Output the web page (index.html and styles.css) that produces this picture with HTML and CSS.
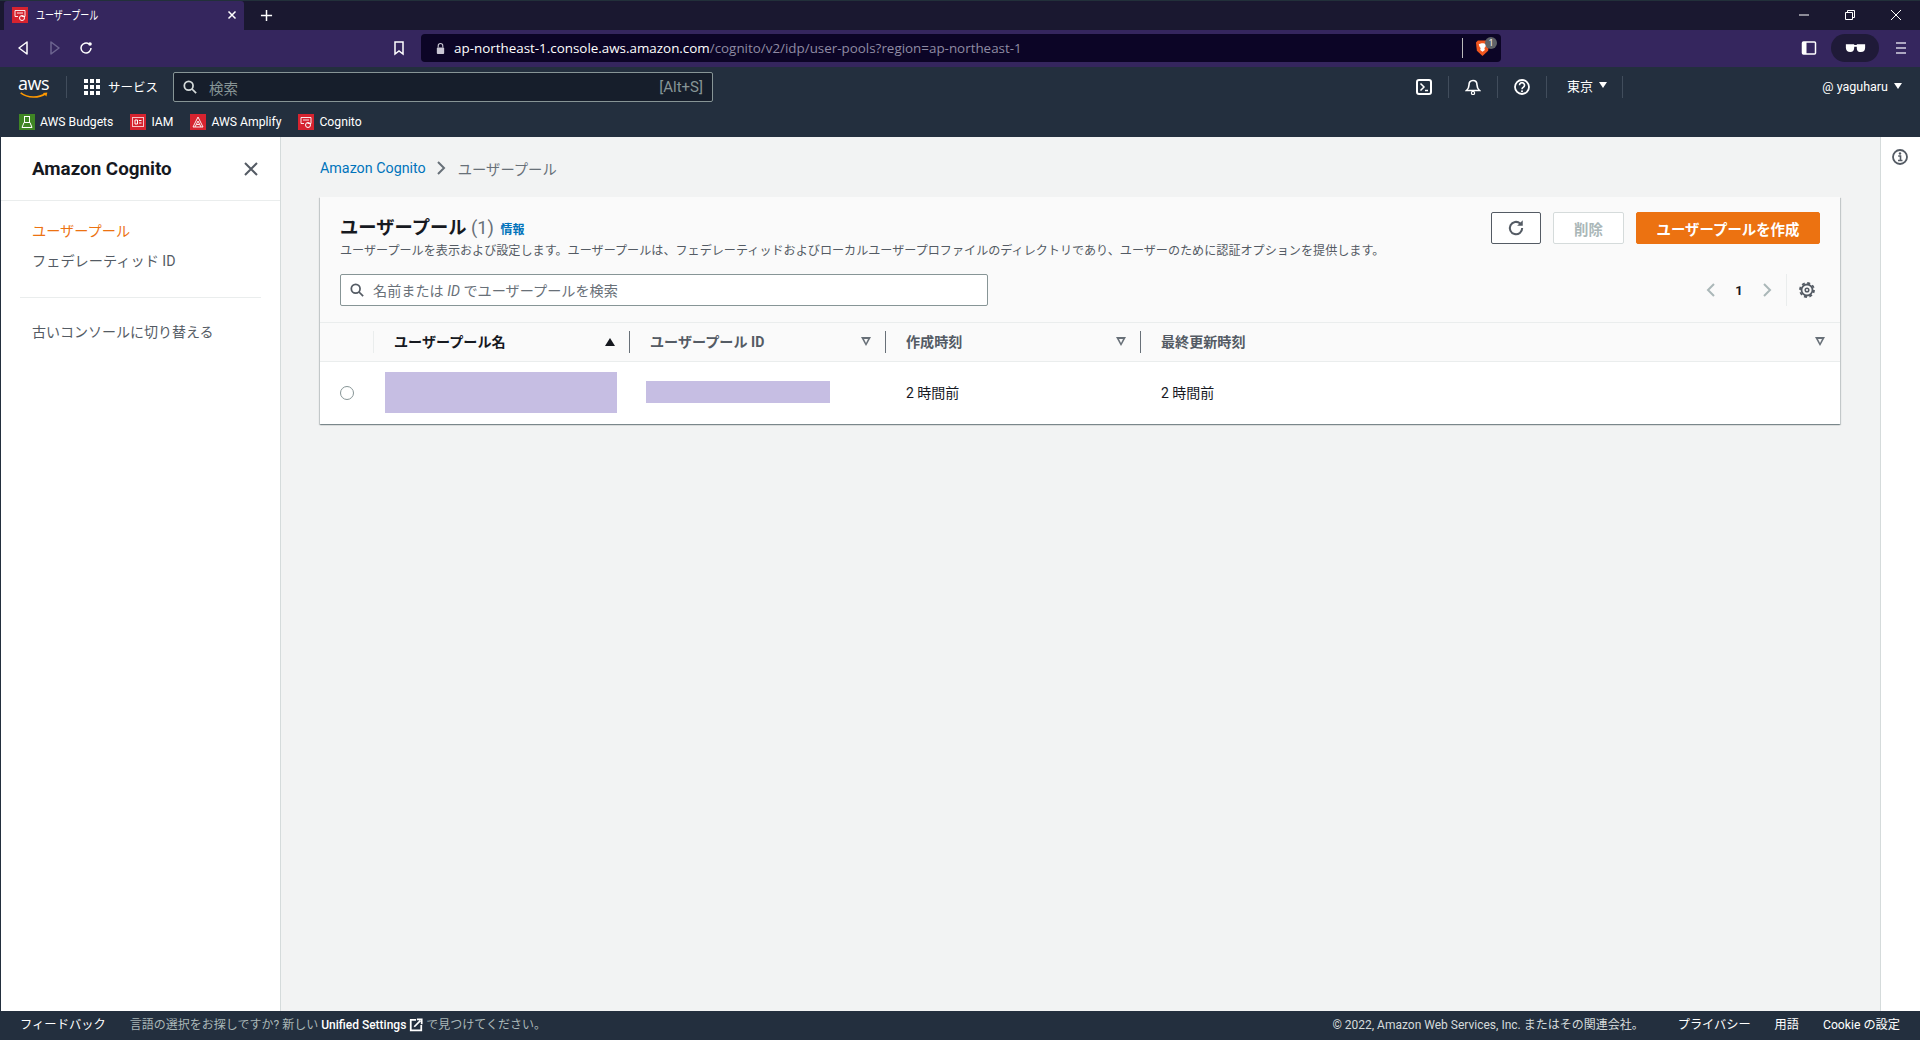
FILE: index.html
```html
<!DOCTYPE html>
<html lang="ja">
<head>
    <meta charset="UTF-8">
    <meta name="viewport" content="width=device-width, initial-scale=1.0">
    <title>ユーザープール</title>
    <link rel="stylesheet" href="styles.css">
</head>
<body>
    <div class="tabbar">
        <div class="tab">
            <svg class="favicon" viewBox="0 0 16 16"><rect width="16" height="16" fill="#d6232f"/><path d="M3 3.500h10v6H9.500M3 3.500v6h3" fill="none" stroke="#fff" stroke-width=".9"/><path d="M5 6h6" stroke="#fff" stroke-width=".9"/><circle cx="10" cy="11" r="2.500" fill="none" stroke="#fff"/></svg>
            <span class="tab-title">ユーザープール</span>
            <svg class="tab-close" viewBox="0 0 10 10"><path d="M1.500 1.500l7 7M8.500 1.500l-7 7" stroke="#fff" stroke-width="1.500"/></svg>
        </div>
        <svg class="tab-new" viewBox="0 0 14 14"><path d="M7 1v12M1 7h12" stroke="#fff" stroke-width="1.600"/></svg>
        <div class="win-buttons">
            <svg viewBox="0 0 12 12"><path d="M1 6h10" stroke="#fff"/></svg>
            <svg viewBox="0 0 12 12"><path d="M1.500 3.500h7v7h-7zM3.500 3.500v-2h7v7h-2" fill="none" stroke="#fff"/></svg>
            <svg viewBox="0 0 12 12"><path d="M1 1l10 10M11 1L1 11" stroke="#fff"/></svg>
        </div>
    </div>

    <div class="toolbar">
        <svg class="tool-icon back" viewBox="0 0 14 16"><path d="M11 2v12L3 8z" fill="none" stroke="#fff" stroke-width="1.500" stroke-linejoin="round"/></svg>
        <svg class="tool-icon forward" viewBox="0 0 14 16"><path d="M3 2v12l8-6z" fill="none" stroke="#6d6590" stroke-width="1.500" stroke-linejoin="round"/></svg>
        <svg class="tool-icon reload" viewBox="0 0 16 16"><path d="M13 8a5 5 0 1 1-2-4" fill="none" stroke="#fff" stroke-width="1.500"/><circle cx="12" cy="4" r="1.800" fill="#fff"/></svg>
        <svg class="tool-icon bookmark" viewBox="0 0 14 16"><path d="M3 2h8v12l-4-3-4 3z" fill="none" stroke="#fff" stroke-width="1.500"/></svg>
        <div class="address">
            <svg class="lock" viewBox="0 0 12 14"><path d="M3.500 6V4a2.500 2.500 0 0 1 5 0v2" fill="none" stroke="#c9c7d4" stroke-width="1.200"/><rect x="2" y="6" width="8" height="7" rx="1" fill="#c9c7d4"/></svg>
            <span class="url"><b>ap-northeast-1.console.aws.amazon.com</b>/cognito/v2/idp/user-pools?region=ap-northeast-1</span>
            <span class="address-sep"></span>
            <span class="brave">
                <svg viewBox="0 0 16 18"><path d="M3 1h10l2 2-1 9-6 5.500L2 12 1 3z" fill="#f1561f"/><path d="M4 5l3-1h2l3 1-1 3-1 1 .5 2L8 13l-2.500-2L6 9 5 8z" fill="#fff"/></svg>
                <span class="brave-count">1</span>
            </span>
        </div>
        <svg class="tool-icon sidebar-toggle" viewBox="0 0 16 16"><rect x="1.500" y="2" width="13" height="12" rx="1" fill="none" stroke="#fff" stroke-width="1.500"/><rect x="1.500" y="2" width="4" height="12" fill="#fff"/></svg>
        <div class="private">
            <svg viewBox="0 0 24 12"><path d="M1 1h9.500v4c0 3-1.500 5-4.500 5S1 8 1 5zM13.500 1H23v4c0 3-1.500 5-5 5s-4.500-2-4.500-5zM10 2h4v2h-4z" fill="#fff"/></svg>
        </div>
        <svg class="tool-icon menu" viewBox="0 0 14 16"><path d="M2 3h10M2 8h10M2 13h10" stroke="#d5d2e2" stroke-width="1.500"/></svg>
    </div>

    <div class="aws-nav">
        <div class="nav-main">
            <div class="aws-logo">
                <span class="aws-word">aws</span>
                <svg viewBox="0 0 32 9"><path d="M1 1c8 6 20 6 28 1" fill="none" stroke="#f90" stroke-width="1.800"/><path d="M26 1l5-.5-1 4.500z" fill="#f90"/></svg>
            </div>
            <span class="nav-sep logo-sep"></span>
            <svg class="grid-icon" viewBox="0 0 16 16"><path d="M0 0h4v4H0zM6 0h4v4H6zM12 0h4v4h-4zM0 6h4v4H0zM6 6h4v4H6zM12 6h4v4h-4zM0 12h4v4H0zM6 12h4v4H6zM12 12h4v4h-4z" fill="#fff"/></svg>
            <span class="services">サービス</span>
            <div class="aws-search">
                <svg viewBox="0 0 16 16"><circle cx="6.500" cy="6.500" r="5" fill="none" stroke="#d5dbdb" stroke-width="2"/><path d="M10 10l5 5" stroke="#d5dbdb" stroke-width="2"/></svg>
                <span class="aws-search-text">検索</span>
                <span class="aws-shortcut">[Alt+S]</span>
            </div>
            <div class="nav-right">
                <span class="nav-item"><svg class="nav-icon" viewBox="0 0 16 16"><rect x="1" y="1" width="14" height="14" rx="2" fill="none" stroke="#fff" stroke-width="2"/><path d="M4.500 4.500L8 8l-3.500 3.500M9 11.500h3" fill="none" stroke="#fff" stroke-width="1.500"/></svg></span>
                <span class="nav-item"><svg class="nav-icon" viewBox="0 0 16 16"><path d="M8 1.500c3 0 4 2 4 4.500 0 2.500 1 4 2.500 5.500h-13C3 10 4 8.500 4 6c0-2.500 1-4.500 4-4.500z" fill="none" stroke="#fff" stroke-width="1.600"/><circle cx="8" cy="14" r="1.600" fill="none" stroke="#fff" stroke-width="1.200"/></svg></span>
                <span class="nav-item"><svg class="nav-icon" viewBox="0 0 16 16"><circle cx="8" cy="8" r="7" fill="none" stroke="#fff" stroke-width="1.800"/><path d="M5.500 6.200a2.500 2.500 0 1 1 3.800 2.100c-.9.500-1.300 1-1.300 2" fill="none" stroke="#fff" stroke-width="1.600"/><circle cx="8" cy="12.200" r="1" fill="#fff"/></svg></span>
                <span class="nav-item region">東京<i class="caret"></i></span>
                <span class="nav-sep"></span>
                <span class="account">@ yaguharu<i class="caret"></i></span>
            </div>
        </div>
        <div class="bookmarks">
            <span class="bookmark-item"><svg viewBox="0 0 16 16"><rect width="16" height="16" fill="#3f8624"/><rect x="5.500" y="2.500" width="5" height="6" fill="none" stroke="#fff"/><path d="M3 13.500l2-5h6l2 5z" fill="none" stroke="#fff"/></svg>AWS Budgets</span>
            <span class="bookmark-item"><svg viewBox="0 0 16 16"><rect width="16" height="16" fill="#d6232f"/><rect x="2.500" y="3.500" width="11" height="9" fill="none" stroke="#f7c4c8"/><path d="M5 6h2.500v4H5zM9 6.500h2.500M9 9h2.500" fill="none" stroke="#fff"/></svg>IAM</span>
            <span class="bookmark-item"><svg viewBox="0 0 16 16"><rect width="16" height="16" fill="#d6232f"/><path d="M8 3l5 10H3zM8 7l3 6M8 7l-3 6M6.500 10.500h3" fill="none" stroke="#fff" stroke-width=".9"/></svg>AWS Amplify</span>
            <span class="bookmark-item"><svg viewBox="0 0 16 16"><rect width="16" height="16" fill="#d6232f"/><path d="M3 3.500h10v6H9.500M3 3.500v6h3" fill="none" stroke="#fff" stroke-width=".9"/><path d="M5 6h6" stroke="#fff" stroke-width=".9"/><circle cx="10" cy="11" r="2.500" fill="none" stroke="#fff"/></svg>Cognito</span>
        </div>
    </div>

    <div class="app">
        <nav class="side">
            <div class="side-head">
                <span class="side-title">Amazon Cognito</span>
                <svg class="side-close" viewBox="0 0 14 14"><path d="M1 1l12 12M13 1L1 13" stroke="#545b64" stroke-width="2"/></svg>
            </div>
            <div class="side-links">
                <a class="side-link active">ユーザープール</a>
                <a class="side-link">フェデレーティッド ID</a>
            </div>
            <div class="side-divider"></div>
            <a class="side-link old">古いコンソールに切り替える</a>
        </nav>

        <main class="content">
            <div class="breadcrumb">
                <a class="crumb-link">Amazon Cognito</a>
                <svg viewBox="0 0 10 16"><path d="M2 2l6 6-6 6" fill="none" stroke="#687078" stroke-width="2"/></svg>
                <span class="crumb-current">ユーザープール</span>
            </div>

            <section class="card">
                <div class="card-head">
                    <div class="card-top">
                        <div class="card-text">
                            <h1 class="card-title">ユーザープール <span class="count">(1)</span> <a class="info">情報</a></h1>
                            <p class="card-desc">ユーザープールを表示および設定します。ユーザープールは、フェデレーティッドおよびローカルユーザープロファイルのディレクトリであり、ユーザーのために認証オプションを提供します。</p>
                        </div>
                        <div class="actions">
                            <button class="btn btn-icon"><svg viewBox="0 0 16 16"><path d="M13.500 8a5.500 5.500 0 1 1-1.800-4" fill="none" stroke="#545b64" stroke-width="1.800"/><path d="M14 1v5h-5z" fill="#545b64"/></svg></button>
                            <button class="btn btn-disabled">削除</button>
                            <button class="btn btn-primary">ユーザープールを作成</button>
                        </div>
                    </div>
                    <div class="filter-row">
                        <div class="filter">
                            <svg viewBox="0 0 16 16"><circle cx="6.500" cy="6.500" r="5" fill="none" stroke="#545b64" stroke-width="2"/><path d="M10 10l5 5" stroke="#545b64" stroke-width="2"/></svg>
                            <span class="filter-text">名前または <em>ID</em> でユーザープールを検索</span>
                        </div>
                        <div class="pager">
                            <svg viewBox="0 0 10 16"><path d="M8 2L2 8l6 6" fill="none" stroke="#aab7b8" stroke-width="2"/></svg>
                            <span class="page-num">1</span>
                            <svg viewBox="0 0 10 16"><path d="M2 2l6 6-6 6" fill="none" stroke="#aab7b8" stroke-width="2"/></svg>
                            <span class="pager-sep"></span>
                            <svg class="gear" viewBox="0 0 16 16"><circle cx="8" cy="8" r="5.500" fill="none" stroke="#545b64" stroke-width="1.800"/><circle cx="8" cy="8" r="7" fill="none" stroke="#545b64" stroke-width="1.800" stroke-dasharray="3 2.500"/><circle cx="8" cy="8" r="1.800" fill="none" stroke="#545b64" stroke-width="1.500"/></svg>
                        </div>
                    </div>
                </div>

                <div class="table-head">
                    <div class="th th-radio"></div>
                    <div class="th th-name sorted">ユーザープール名<i class="sort-filled"></i></div>
                    <div class="th th-id">ユーザープール ID<i class="sort-outline"></i></div>
                    <div class="th th-created">作成時刻<i class="sort-outline"></i></div>
                    <div class="th th-updated">最終更新時刻<i class="sort-outline"></i></div>
                </div>
                <div class="table-row">
                    <div class="td-radio"><span class="radio"></span></div>
                    <div class="td-name"><span class="mask mask-name"></span></div>
                    <div class="td-id"><span class="mask mask-id"></span></div>
                    <div class="td-created">2 時間前</div>
                    <div class="td-updated">2 時間前</div>
                </div>
            </section>
        </main>

        <aside class="tools">
            <svg viewBox="0 0 16 16"><circle cx="8" cy="8" r="7" fill="none" stroke="#545b64" stroke-width="1.800"/><path d="M6.200 7h2.300v4.500M6 11.500h4.500" fill="none" stroke="#545b64" stroke-width="1.600"/><circle cx="8" cy="4.500" r="1.200" fill="#545b64"/></svg>
        </aside>
    </div>

    <footer class="footer">
        <span class="foot-feedback">フィードバック</span>
        <span class="foot-lang">言語の選択をお探しですか? 新しい <b>Unified Settings</b> <svg viewBox="0 0 16 16"><path d="M8 2H2v12h12V8" fill="none" stroke="#fff" stroke-width="2"/><path d="M6 10l7-7M9 1.500h5.500V7" fill="none" stroke="#fff" stroke-width="2"/></svg> で見つけてください。</span>
        <span class="foot-right">
            <span class="foot-copy">© 2022, Amazon Web Services, Inc. またはその関連会社。</span>
            <span>プライバシー</span>
            <span>用語</span>
            <span>Cookie の設定</span>
        </span>
    </footer>
</body>
</html>
```

FILE: styles.css
```css
* {
    box-sizing: border-box;
}
html, body {
    height: 100%;
}
body {
    margin: 0;
    height: 1040px;
    overflow: hidden;
    display: flex;
    flex-direction: column;
    font-family: "Roboto", "Noto Sans CJK JP", sans-serif;
    font-size: 14px;
    color: #16191f;
    background: #f2f3f3;
}
svg {
    display: block;
    flex: none;
}

/* browser chrome */
.tabbar {
    height: 30px;
    flex: none;
    display: flex;
    align-items: flex-end;
    background: #1a1830;
    border-top: 1px solid #22303a;
    padding-left: 4px;
}
.tab {
    width: 240px;
    height: 29px;
    display: flex;
    align-items: center;
    padding: 0 7px 2px 8px;
    background: #35265e;
    border-radius: 3px 3px 0 0;
    color: #fff;
    font-size: 12px;
}
.favicon {
    width: 16px;
    height: 16px;
}
.tab-title {
    margin-left: 8px;
    flex: 1;
    transform: scaleX(0.75);
    transform-origin: left center;
    white-space: nowrap;
}
.tab-close {
    width: 10px;
    height: 10px;
}
.tab-new {
    width: 13px;
    height: 13px;
    margin: 0 0 8px 16px;
}
.win-buttons {
    margin-left: auto;
    display: flex;
    align-self: center;
    gap: 34px;
    padding: 0 18px 2px 0;
}
.win-buttons svg {
    width: 12px;
    height: 12px;
}
.toolbar {
    height: 37px;
    flex: none;
    display: flex;
    align-items: center;
    background: #35265e;
    padding: 0 0 1px 15px;
}
.tool-icon {
    width: 16px;
    height: 16px;
}
.forward {
    margin-left: 16px;
}
.reload {
    margin-left: 15px;
}
.bookmark {
    margin-left: 297px;
}
.address {
    width: 1080px;
    height: 28px;
    margin-left: 14px;
    display: flex;
    align-items: center;
    padding: 0 4px 0 14px;
    background: #0c0526;
    border-radius: 4px;
    font-family: "Open Sans", sans-serif;
    font-size: 13.400px;
    color: #8f8ba3;
}
.lock {
    width: 11px;
    height: 13px;
}
.url {
    margin-left: 8px;
    flex: 1;
}
.url b {
    font-weight: 400;
    color: #fff;
}
.address-sep {
    width: 1px;
    height: 20px;
    background: #bbb;
    margin-right: 12px;
}
.brave {
    position: relative;
    width: 22px;
    height: 18px;
}
.brave svg {
    width: 15px;
    height: 18px;
}
.brave-count {
    position: absolute;
    right: 0;
    top: -2px;
    width: 12px;
    height: 12px;
    line-height: 12px;
    border-radius: 50%;
    background: #5f6368;
    color: #fff;
    font-size: 9px;
    text-align: center;
}
.sidebar-toggle {
    margin-left: 300px;
}
.private {
    width: 48px;
    height: 28px;
    margin-left: 14px;
    display: flex;
    align-items: center;
    justify-content: center;
    background: #1f1a38;
    border-radius: 14px;
}
.private svg {
    width: 21px;
    height: 11px;
}
.menu {
    margin-left: 15px;
    width: 14px;
}

/* aws console nav */
.aws-nav {
    height: 70px;
    flex: none;
    background: #232f3e;
    color: #fff;
}
.nav-main {
    height: 40px;
    display: flex;
    align-items: center;
    padding-left: 18px;
}
.aws-logo {
    width: 32px;
    height: 26px;
    position: relative;
}
.aws-word {
    display: block;
    font-family: "Open Sans", sans-serif;
    font-size: 18px;
    line-height: 18px;
    letter-spacing: -0.5px;
}
.aws-logo svg {
    width: 32px;
    height: 8px;
}
.nav-sep {
    width: 1px;
    height: 22px;
    background: #414d5c;
}
.logo-sep {
    margin-left: 16px;
}
.grid-icon {
    width: 16px;
    height: 16px;
    margin-left: 17px;
}
.services {
    margin-left: 8px;
    font-size: 12.500px;
    padding-bottom: 2px;
}
.aws-search {
    width: 540px;
    height: 30px;
    margin-left: 15px;
    display: flex;
    align-items: center;
    padding: 0 9px;
    background: #161e2b;
    border: 1px solid #879596;
    border-radius: 2px;
    color: #879596;
    font-size: 14.500px;
}
.aws-search svg {
    width: 14px;
    height: 14px;
}
.aws-search-text {
    margin-left: 12px;
    flex: 1;
}
.aws-shortcut {
    font-size: 15px;
}
.nav-right {
    flex: 1;
    display: flex;
    align-items: center;
    height: 22px;
    padding-left: 687px;
}
.nav-item {
    height: 22px;
    display: flex;
    align-items: center;
    padding: 0 16px;
    border-right: 1px solid #414d5c;
}
.nav-icon {
    width: 16px;
    height: 16px;
}
.region {
    font-size: 13px;
    padding: 0 0 4px 20px;
    border-right: 0;
}
.caret {
    display: inline-block;
    margin-left: 6px;
    border-left: 4px solid transparent;
    border-right: 4px solid transparent;
    border-top: 6px solid #fff;
}
.region + .nav-sep {
    margin-left: 15px;
}
.account {
    margin-left: auto;
    padding: 0 18px 2px 0;
    font-size: 12.500px;
    display: flex;
    align-items: center;
}
.bookmarks {
    height: 30px;
    display: flex;
    align-items: center;
    gap: 17px;
    padding: 0 0 0 19px;
    font-size: 12.200px;
}
.bookmark-item {
    display: flex;
    align-items: center;
    gap: 5px;
}
.bookmark-item svg {
    width: 16px;
    height: 16px;
}

/* page */
.app {
    flex: 1;
    min-height: 0;
    display: flex;
}
.side {
    width: 281px;
    flex: none;
    background: #fff;
    border-left: 1px solid #232f3e;
    border-right: 1px solid #d5dbdb;
    color: #545b64;
}
.side-head {
    height: 64px;
    display: flex;
    align-items: center;
    justify-content: space-between;
    padding: 0 22px 0 31px;
    border-bottom: 1px solid #eaeded;
}
.side-title {
    font-size: 18.800px;
    font-weight: 700;
    color: #16191f;
}
.side-close {
    width: 14px;
    height: 14px;
}
.side-links {
    padding-top: 15px;
}
.side-link {
    display: block;
    height: 30px;
    line-height: 30px;
    padding-left: 31px;
    font-size: 14.200px;
}
.active {
    color: #ec7211;
}
.side-divider {
    height: 1px;
    margin: 21px 19px 19px 19px;
    background: #eaeded;
}
.side-link.old {
    font-size: 14px;
}
.content {
    flex: 1;
    min-width: 0;
    padding: 0 40px 0 39px;
}
.breadcrumb {
    height: 60px;
    display: flex;
    align-items: center;
    padding-top: 2px;
    font-size: 14.300px;
}
.breadcrumb svg {
    width: 10px;
    height: 16px;
    margin: 0 12px 0 10px;
}
.crumb-link {
    color: #0073bb;
}
.crumb-current {
    color: #687078;
}
.card {
    background: #fff;
    box-shadow: 0 1px 1px 0 rgba(0, 28, 36, 0.3), 1px 1px 1px 0 rgba(0, 28, 36, 0.15), -1px 1px 1px 0 rgba(0, 28, 36, 0.15);
}
.card-head {
    height: 126px;
    padding: 15px 20px 0;
    background: #fafafa;
    border-bottom: 1px solid #eaeded;
}
.card-top {
    height: 62px;
    display: flex;
    justify-content: space-between;
}
.card-text {
    padding-top: 3px;
}
.card-title {
    margin: 0 0 2px;
    height: 26px;
    font-size: 18.300px;
    line-height: 26px;
    font-weight: 700;
}
.count {
    font-weight: 400;
    color: #687078;
}
.info {
    margin-left: 2px;
    font-size: 12px;
    font-weight: 700;
    color: #0073bb;
}
.card-desc {
    margin: 0;
    font-size: 12.100px;
    line-height: 16px;
    color: #545b64;
}
.actions {
    display: flex;
    gap: 12px;
    height: 32px;
}
.btn {
    height: 32px;
    border-radius: 2px;
    font-family: inherit;
    font-size: 14.400px;
    font-weight: 700;
    padding: 0;
}
.btn-icon {
    width: 50px;
    display: flex;
    align-items: center;
    justify-content: center;
    background: #fff;
    border: 1px solid #545b64;
}
.btn-icon svg {
    width: 18px;
    height: 18px;
}
.btn-disabled {
    width: 71px;
    background: #fff;
    border: 1px solid #d5dbdb;
    color: #aab7b8;
}
.btn-primary {
    width: 184px;
    background: #ec7211;
    border: 1px solid #ec7211;
    color: #fff;
}
.filter-row {
    display: flex;
    align-items: center;
    justify-content: space-between;
}
.filter {
    width: 648px;
    height: 32px;
    display: flex;
    align-items: center;
    padding-left: 9px;
    background: #fff;
    border: 1px solid #879596;
    border-radius: 2px;
}
.filter svg {
    width: 14px;
    height: 14px;
}
.filter-text {
    margin-left: 9px;
    font-size: 14.150px;
    color: #687078;
}
.pager {
    display: flex;
    align-items: center;
    height: 32px;
}
.pager svg {
    width: 10px;
    height: 16px;
}
.page-num {
    width: 46px;
    text-align: center;
    font-weight: 700;
    font-size: 13px;
}
.pager-sep {
    width: 1px;
    height: 32px;
    margin: 0 12px 0 14px;
    background: #eaeded;
}
.pager .gear {
    width: 16px;
    height: 16px;
    margin-right: 5px;
}
.table-head {
    height: 39px;
    display: flex;
    align-items: center;
    padding-bottom: 1px;
    background: #fafafa;
    border-bottom: 1px solid #eaeded;
    font-size: 14.100px;
    font-weight: 700;
    color: #545b64;
}
.th {
    display: flex;
    align-items: center;
    justify-content: space-between;
    height: 22px;
    border-right: 1px solid #687078;
    padding: 0 14px 2px 20px;
}
.th-radio {
    width: 54px;
    border-right-color: #eaeded;
}
.th-name {
    width: 256px;
    color: #16191f;
}
.th-id {
    width: 256px;
}
.th-created {
    width: 255px;
}
.th-updated {
    flex: 1;
    border-right: 0;
    padding-right: 15px;
}
.sort-filled {
    margin-top: 2px;
    border-left: 5px solid transparent;
    border-right: 5px solid transparent;
    border-bottom: 8px solid #16191f;
}
.sort-outline {
    position: relative;
    margin-top: 2px;
    border-left: 5.500px solid transparent;
    border-right: 5.500px solid transparent;
    border-top: 9px solid #687078;
}
.sort-outline::after {
    content: "";
    position: absolute;
    left: -2.500px;
    top: -7.500px;
    border-left: 2.500px solid transparent;
    border-right: 2.500px solid transparent;
    border-top: 4px solid #fafafa;
}
.table-row {
    height: 62px;
    display: flex;
    align-items: center;
    padding-bottom: 2px;
    font-size: 14px;
    color: #16191f;
}
.td-radio {
    width: 65px;
    padding: 2px 0 0 20px;
}
.radio {
    display: block;
    width: 14px;
    height: 14px;
    border: 1px solid #879596;
    border-radius: 50%;
    background: #fff;
}
.td-name {
    width: 261px;
}
.td-id {
    width: 260px;
}
.td-created {
    width: 255px;
}
.mask {
    display: block;
    background: #c6bee3;
}
.mask-name {
    width: 232px;
    height: 41px;
}
.mask-id {
    width: 184px;
    height: 22px;
}
.tools {
    width: 40px;
    flex: none;
    background: #fff;
    border-left: 1px solid #d5dbdb;
    padding: 12px 0 0 11px;
}
.tools svg {
    width: 16px;
    height: 16px;
}

/* footer */
.footer {
    height: 29px;
    flex: none;
    display: flex;
    align-items: center;
    padding: 0 20px 4px;
    background: #232f3e;
    color: #d5dbdb;
    font-size: 12px;
}
.foot-feedback {
    color: #fff;
    font-size: 12.300px;
}
.foot-lang {
    margin-left: 24px;
    color: #aab7b8;
}
.foot-lang b {
    font-weight: 500;
    color: #fff;
}
.foot-lang svg {
    display: inline-block;
    vertical-align: -3px;
    width: 14px;
    height: 14px;
}
.foot-right {
    margin-left: auto;
    display: flex;
    gap: 24px;
    color: #fff;
    font-size: 12.200px;
}
.foot-copy {
    margin-right: 10px;
    font-size: 12px;
    color: #d5dbdb;
}
```
